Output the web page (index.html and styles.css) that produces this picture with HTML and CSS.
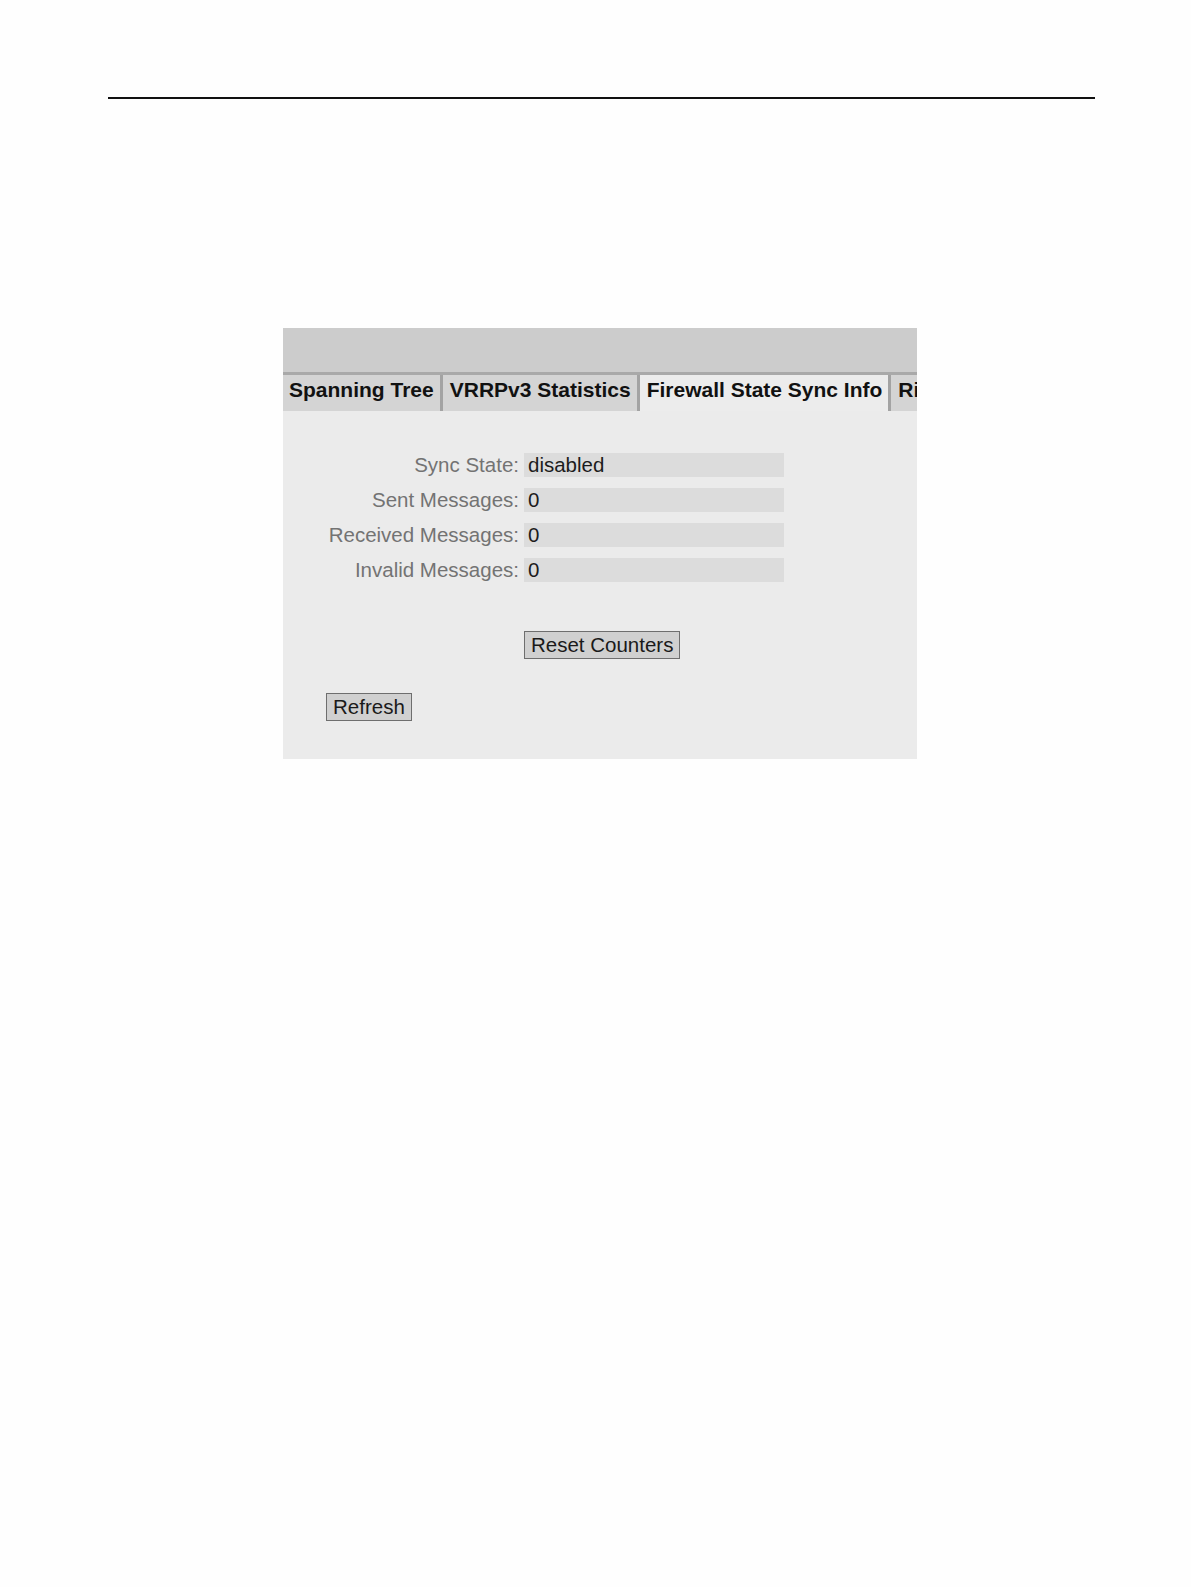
FILE: index.html
```html
<!DOCTYPE html>
<html>
<head>
<meta charset="utf-8">
<link rel="stylesheet" href="styles.css">
</head>
<body>
<div class="rule"></div>
<div class="panel">
  <div class="titlebar"></div>
  <div class="tabs">
    <div class="tab">Spanning Tree</div>
    <div class="tab">VRRPv3 Statistics</div>
    <div class="tab active">Firewall State Sync Info</div>
    <div class="tab">Ring Redundancy</div>
  </div>
  <div class="content">
    <div class="form">
      <div class="label">Sync State:</div><div class="value">disabled</div>
      <div class="label">Sent Messages:</div><div class="value">0</div>
      <div class="label">Received Messages:</div><div class="value">0</div>
      <div class="label">Invalid Messages:</div><div class="value">0</div>
    </div>
    <div class="reset-row"><button class="btn">Reset Counters</button></div>
    <div class="refresh-row"><button class="btn">Refresh</button></div>
  </div>
</div>
</body>
</html>
```

FILE: styles.css
```css
html, body {
  margin: 0;
  padding: 0;
  background: #fefefe;
  font-family: "Liberation Sans", Arial, sans-serif;
}
.rule {
  margin: 97px 0 0 108px;
  width: 987px;
  border-top: 2px solid #111;
}
.panel {
  margin: 229px 0 0 283px;
  width: 634px;
  height: 431px;
  background: #ebebeb;
  display: flex;
  flex-direction: column;
  overflow: hidden;
}
.titlebar {
  height: 44px;
  background: #cccccc;
  flex: none;
}
.tabs {
  display: flex;
  height: 36px;
  border-top: 3px solid #a9a9a9;
  background: #d4d4d4;
  flex: none;
  overflow: hidden;
  white-space: nowrap;
}
.tab {
  flex: none;
  padding: 0 6px 0 7px;
  font-weight: bold;
  font-size: 21px;
  line-height: 30px;
  color: #111;
  background: #d4d4d4;
  border-right: 3px solid #a3a3a3;
}
.tab:first-child {
  padding-left: 6px;
}
.tab.active {
  background: #ececec;
}
.content {
  flex: 1;
  background: #ebebeb;
}
.form {
  display: grid;
  grid-template-columns: 236px 260px;
  column-gap: 5px;
  row-gap: 11px;
  margin-top: 42px;
}
.label {
  text-align: right;
  font-size: 20.5px;
  line-height: 24px;
  height: 24px;
  color: #737373;
}
.value {
  background: #dcdcdc;
  font-size: 20.5px;
  line-height: 24px;
  height: 24px;
  padding-left: 4px;
  color: #1c1c1c;
}
.reset-row {
  margin: 49px 0 0 241px;
}
.refresh-row {
  margin: 34px 0 0 43px;
}
.btn {
  font-family: "Liberation Sans", Arial, sans-serif;
  font-size: 20.5px;
  line-height: 24px;
  height: 28px;
  padding: 0 6px;
  margin: 0;
  background: #d0d0d0;
  color: #1a1a1a;
  border: 1px solid #6e6e6e;
  border-radius: 0;
}
```
